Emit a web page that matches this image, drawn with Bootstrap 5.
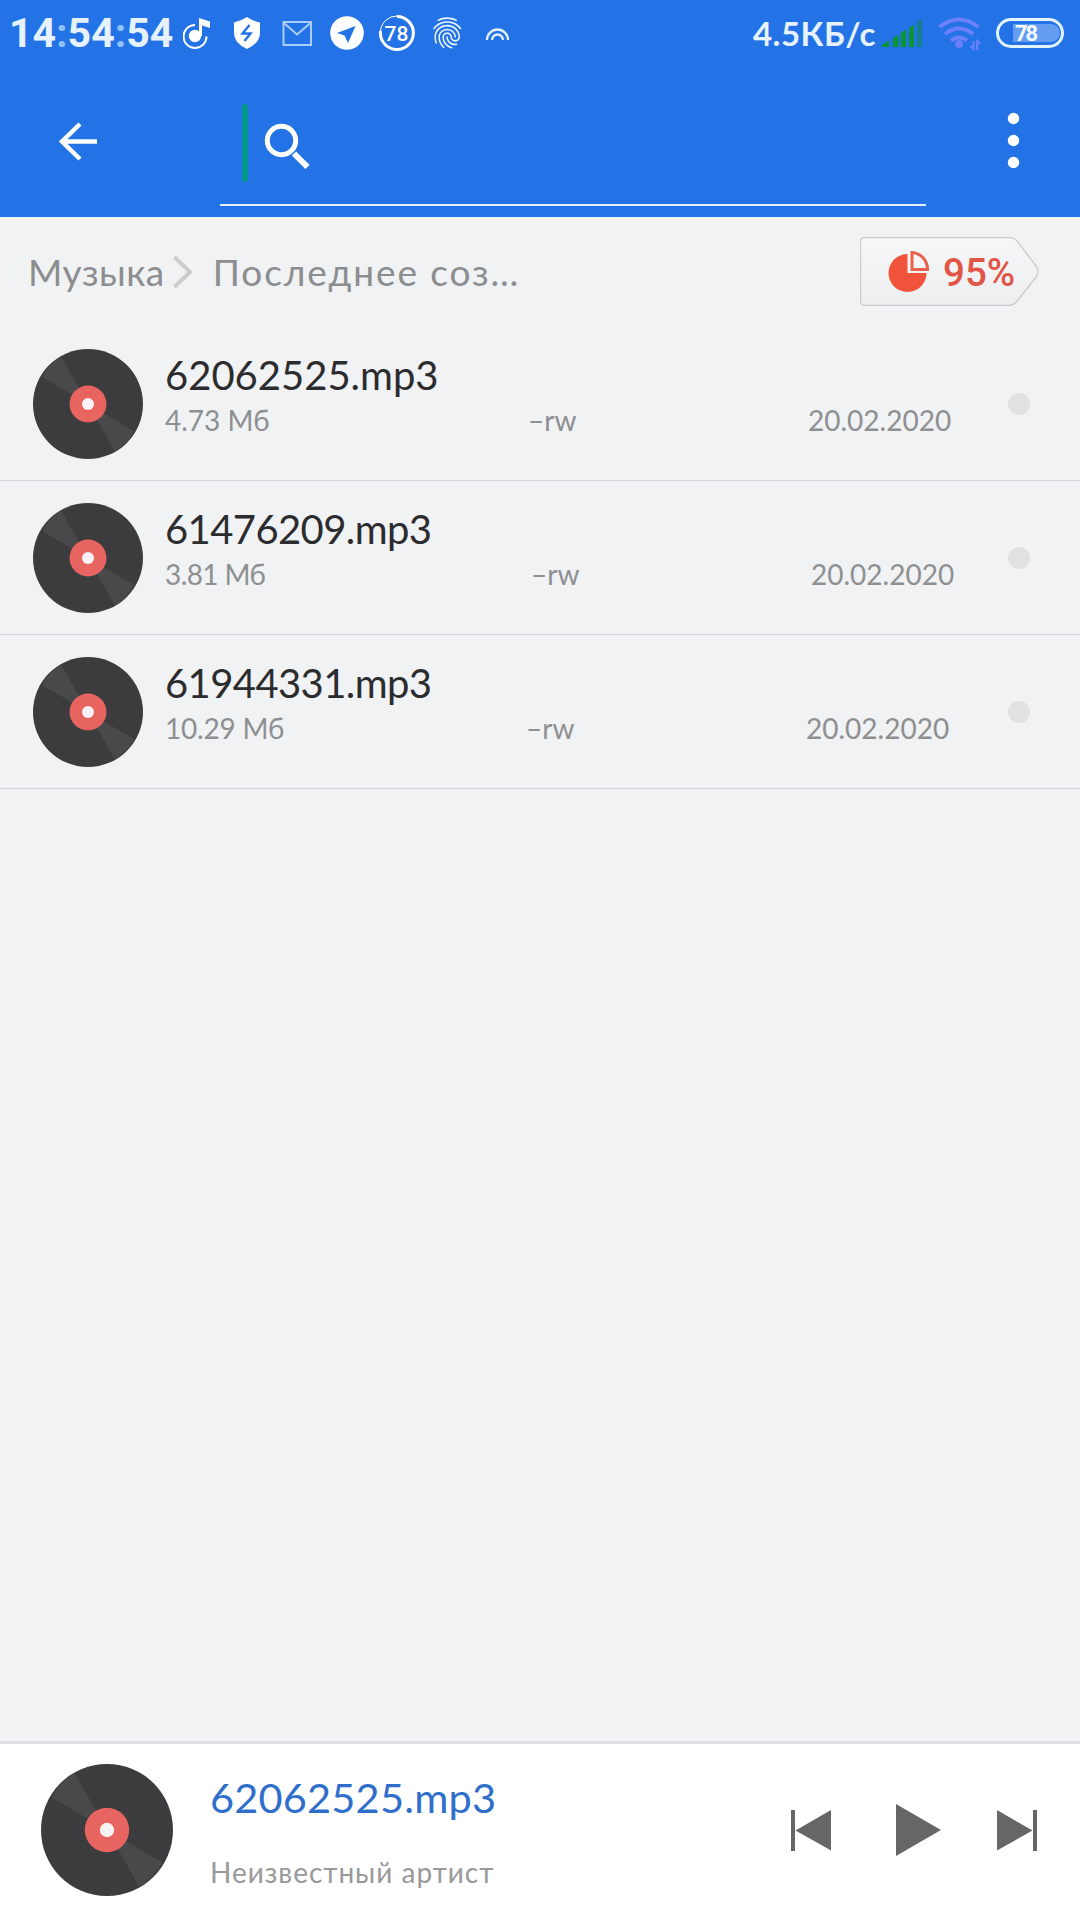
<!DOCTYPE html>
<html lang="ru">
<head>
<meta charset="utf-8">
<meta name="viewport" content="width=device-width, initial-scale=1">
<title>Музыка</title>
<link href="https://cdn.jsdelivr.net/npm/bootstrap@5.3.0/dist/css/bootstrap.min.css" rel="stylesheet">
<style>
  body { background: #f0f2f4; font-family: Lato, "Noto Sans", sans-serif; color: #2c2c2e; width: 1080px; height: 1920px; overflow: hidden; }
  svg { display: block; flex: none; }
  .topbar { background: #2373e6; height: 217px; }
  .status { height: 66px; padding-left: 9px; padding-right: 16px; color: #e6f2ff; }
  .clock { font: 700 41px/66px Roboto, sans-serif; width: 174px; white-space: nowrap; }
  .clock i { font-style: normal; color: #8fc0ff; }
  .rate { font-weight: 700; font-size: 33px; line-height: 66px; letter-spacing: .5px; white-space: nowrap; }
  .toolrow { height: 151px; padding-left: 52px; }
  .field { width: 706px; height: 140px; margin-left: 116px; padding: 16px 0 0 22px; border-bottom: 2px solid #e4f0fd; }
  .caret { width: 6px; height: 78px; background: #009688; }
  .overflow-menu { margin-left: 67px; }
  .crumbs { height: 110px; padding-left: 28px; padding-right: 41px; font-size: 37px; color: #8c8d8f; }
  .crumbs span { line-height: 48px; white-space: nowrap; }
  .c1 { letter-spacing: .5px; }
  .c2 { letter-spacing: 1.9px; margin-left: 10px; }
  .quota { width: 179px; height: 69px; top: -1px; color: #e05545; }
  .quota b { left: 83px; top: 12px; font: 500 38.5px/48px Roboto, sans-serif; }
  .track { height: 154px; padding-left: 33px; padding-right: 50px; border-bottom: 1px solid #d3d5d8; }
  .info { width: 843px; margin-left: 22px; padding-top: 23px; }
  .name { font-size: 40px; line-height: 50px; white-space: nowrap; }
  .n2, .n3 { letter-spacing: -.6px; }
  .meta { font-size: 28px; line-height: 38px; color: #8e8f91; white-space: nowrap; padding-top: 1px; }
  .size-a { width: 363px; } .size-b { width: 366px; letter-spacing: -.6px; } .size-c { width: 361px; letter-spacing: -.2px; }
  .perm { width: 280px; }
  .dot { width: 22px; height: 22px; background: #e0e1e3; }
  .player { height: 179px; border-top: 3px solid #dfe0e3; padding-left: 41px; padding-right: 42px; }
  .cover { margin-top: 20px; }
  .now-box { margin-left: 37px; padding-top: 28px; }
  .now { font-size: 41.5px; line-height: 50px; letter-spacing: .2px; color: #2f6fcb; white-space: nowrap; }
  .artist { font-size: 28px; line-height: 36px; letter-spacing: .97px; color: #999; white-space: nowrap; margin-top: 32px; }
  .controls { margin-top: 56px; }
</style>
<script src="https://cdn.jsdelivr.net/npm/bootstrap@5.3.0/dist/js/bootstrap.bundle.min.js"></script>
</head>
<body class="d-flex flex-column">
<svg width="0" height="0" class="position-absolute">
  <symbol id="disc" viewBox="0 0 110 110">
    <circle cx="55" cy="55" r="55" fill="#3c3c3e"/>
    <path d="M55 55L9 28A55 55 0 0 1 28 7.500ZM55 55L101 82A55 55 0 0 1 82 102.500Z" fill="#49494b"/>
    <circle cx="55" cy="55" r="18.500" fill="#e86461"/>
    <circle cx="55" cy="55" r="6" fill="#f7f2f3"/>
  </symbol>
</svg>

<header class="topbar flex-shrink-0">
  <div class="status d-flex align-items-center">
    <div class="clock">14<i>:</i>54<i>:</i>54</div>
    <svg width="340" height="66" viewBox="183 0 340 66" fill="none" stroke="#fff">
      <path d="M195 25A11.500 11.500 0 1 0 206.500 36.500" stroke-width="2"/>
      <circle cx="195" cy="36" r="6.200" fill="#fff" stroke="none"/>
      <path d="M199 18L210 21.500V28L202 25.500V36H199Z" fill="#fff" stroke="none"/>
      <path d="M247 17Q253 21 260 22.500V33Q260 43 247 49Q234 43 234 33V22.500Q241 21 247 17Z" fill="#fff" stroke="none"/>
      <path d="M249.500 25L242.500 33.500H250.500L244.500 41" stroke="#2373e6" stroke-width="2.400"/>
      <g stroke="#a9cdfb" stroke-width="2"><rect x="283.500" y="22" width="27.500" height="23"/><path d="M284 23L297 34.500L310.500 23"/></g>
      <circle cx="347" cy="33" r="16.800" fill="#fff" stroke="none"/>
      <path d="M355.500 26L337 33L344.500 35.500L348 43Z" fill="#2373e6" stroke="none"/>
      <path d="M397 16.500A16.500 16.500 0 1 1 380.500 31" stroke-width="3"/>
      <path d="M380.500 31A16.500 16.500 0 0 1 397 16" stroke-width="1"/>
      <text x="396.500" y="40.500" text-anchor="middle" fill="#fff" stroke="none" font-family="Roboto" font-size="21" font-weight="500">78</text>
      <g transform="translate(428.500 14.200) scale(1.560)" fill="#eaf4ff" stroke="none">
        <path d="M17.810 4.470c-.08 0-.16-.02-.23-.06C15.660 3.420 14 3 12.010 3c-1.980 0-3.860.47-5.570 1.410-.24.13-.54.04-.68-.2-.13-.24-.04-.55.2-.68C7.820 2.520 9.860 2 12.010 2c2.130 0 3.990.47 6.030 1.520.25.13.34.43.21.67-.09.18-.26.28-.44.28zM3.500 9.720c-.1 0-.2-.03-.29-.09-.23-.16-.28-.47-.12-.7.99-1.400 2.250-2.500 3.750-3.270C9.980 4.040 14 4.030 17.150 5.650c1.500.77 2.760 1.860 3.750 3.250.16.22.11.54-.12.7-.23.16-.54.11-.7-.12-.9-1.260-2.040-2.250-3.390-2.940-2.870-1.470-6.540-1.470-9.400.01-1.360.7-2.500 1.700-3.400 2.960-.08.14-.23.21-.39.21zm6.250 12.070c-.13 0-.26-.05-.35-.15-.87-.87-1.340-1.430-2.010-2.640-.69-1.230-1.050-2.730-1.050-4.340 0-2.970 2.540-5.390 5.660-5.390s5.660 2.420 5.660 5.390c0 .28-.22.5-.5.5s-.5-.22-.5-.5c0-2.420-2.090-4.390-4.660-4.390s-4.660 1.970-4.660 4.390c0 1.440.32 2.770.93 3.850.64 1.150 1.080 1.640 1.850 2.420.19.2.19.51 0 .71-.11.1-.24.15-.37.15zm7.170-1.850c-1.190 0-2.240-.3-3.100-.89-1.490-1.010-2.380-2.650-2.380-4.390 0-.28.22-.5.5-.5s.5.22.5.5c0 1.410.72 2.740 1.940 3.560.71.48 1.540.71 2.540.71.24 0 .64-.03 1.040-.1.27-.05.53.13.58.41.05.27-.13.53-.41.58-.57.11-1.070.12-1.210.12zM14.910 22c-.04 0-.09-.01-.13-.02-1.590-.44-2.630-1.030-3.720-2.100-1.400-1.390-2.170-3.240-2.170-5.220 0-1.620 1.380-2.940 3.080-2.940 1.700 0 3.080 1.320 3.080 2.940 0 1.070.93 1.940 2.080 1.940s2.080-.87 2.080-1.940c0-3.770-3.250-6.830-7.250-6.830-2.840 0-5.440 1.580-6.610 4.030-.39.81-.59 1.760-.59 2.800 0 .78.07 2.010.67 3.610.1.26-.03.55-.29.64-.26.1-.55-.04-.64-.29-.49-1.310-.73-2.610-.73-3.960 0-1.200.23-2.290.68-3.240 1.330-2.790 4.280-4.600 7.510-4.600 4.550 0 8.250 3.510 8.250 7.830 0 1.620-1.380 2.940-3.080 2.940s-3.080-1.320-3.080-2.940c0-1.070-.93-1.940-2.080-1.940s-2.080.87-2.080 1.940c0 1.710.66 3.310 1.870 4.510.95.94 1.860 1.460 3.270 1.850.27.07.42.35.35.61-.05.23-.26.38-.47.38z"/>
      </g>
      <path d="M487 40A10.500 10.500 0 0 1 508 40M492 40A5.500 5.500 0 0 1 503 40" stroke="#e3f1ff" stroke-width="2.300"/>
    </svg>
    <div class="rate ms-auto">4.5КБ/с</div>
    <svg width="184" height="66" viewBox="880 0 184 66" fill="none" class="ms-1">
      <path d="M882 47V45L889 40.500V47ZM893 47V38L898.500 34.500V47ZM901 47V33L906 29.500V47ZM909 47V28L914 25V47Z" fill="#0b9433"/>
      <path d="M917 47V22L922 18.500V47Z" fill="#167f8b"/>
      <g stroke="#6c80fc" stroke-width="4"><path d="M939.500 27Q959 12 978.500 27"/><path d="M945 34Q959 23 973 34"/><path d="M951 40.500Q959 34.500 967 40.500"/></g>
      <circle cx="959" cy="44" r="4" fill="#6c80fc"/>
      <path d="M973.500 41V49L970.500 46M977 50V41L980 44" stroke="#6c80fc" stroke-width="2"/>
      <rect x="997.500" y="19.500" width="65" height="27" rx="13.500" stroke="#e3f3ff" stroke-width="3"/>
      <path d="M1013 24H1051A9 9 0 0 1 1051 42H1013Z" fill="#649df0"/>
      <text x="1026.500" y="41" text-anchor="middle" fill="#f3faff" font-family="Roboto" font-size="22" font-weight="700" textLength="23">78</text>
    </svg>
  </div>
  <div class="toolrow d-flex">
    <svg width="52" height="151" viewBox="52 66 52 151" fill="none" stroke="#fff" stroke-width="4.500"><path d="M80 124L62 141.500L80 159M61 141.500H97"/></svg>
    <div class="field d-flex align-items-center">
      <div class="caret rounded-1"></div>
      <svg width="60" height="60" viewBox="248 113 60 60" class="overflow-visible" fill="none" stroke="#fff"><circle cx="281.500" cy="140.500" r="14.200" stroke-width="5"/><path d="M294 153.500L307.500 167" stroke-width="6"/></svg>
    </div>
    <svg width="40" height="151" viewBox="993 66 40 151" fill="#fff" class="overflow-menu"><circle cx="1013.500" cy="118.500" r="5.700"/><circle cx="1013.500" cy="140.500" r="5.700"/><circle cx="1013.500" cy="162.500" r="5.700"/></svg>
  </div>
</header>

<nav class="crumbs d-flex align-items-center flex-shrink-0">
  <span class="c1">Музыка</span>
  <svg width="22" height="36" viewBox="173 255 22 36" class="mx-2" fill="none" stroke="#cbccce" stroke-width="4"><path d="M174.500 258L190 273L174.500 288"/></svg>
  <span class="c2">Последнее соз…</span>
  <div class="quota position-relative ms-auto">
    <svg width="179" height="69" viewBox="860 237 179 69">
      <defs><linearGradient id="tag" x2="0" y2="1"><stop stop-color="#f6f7f9"/><stop offset="1" stop-color="#edeef0"/></linearGradient></defs>
      <path d="M865 237.500H1009Q1014 237.500 1017 241L1036 266Q1040 271.500 1036 277L1017 301.500Q1013 305.500 1009 305.500H865Q860.500 305.500 860.500 300.500V242.500Q860.500 237.500 865 237.500Z" fill="url(#tag)" stroke="#c9cbcd" stroke-width="1.300"/>
      <path d="M907.500 254A19 19 0 1 0 926.500 273H907.500Z" fill="#f0533a"/>
      <path d="M912 252.500V269.500H927.500A16.500 17 0 0 0 912 252.500Z" fill="#f5f5f6" stroke="#e8614d" stroke-width="3"/>
    </svg>
    <b class="position-absolute">95%</b>
  </div>
</nav>

<main class="flex-grow-1">
  <div class="track d-flex align-items-center">
    <svg width="110" height="110"><use href="#disc"/></svg>
    <div class="info align-self-start"><div class="name n1">62062525.mp3</div><div class="meta d-flex"><span class="size-a">4.73 Мб</span><span class="perm">–rw</span><span>20.02.2020</span></div></div>
    <div class="dot rounded-circle flex-shrink-0"></div>
  </div>
  <div class="track d-flex align-items-center">
    <svg width="110" height="110"><use href="#disc"/></svg>
    <div class="info align-self-start"><div class="name n2">61476209.mp3</div><div class="meta d-flex"><span class="size-b">3.81 Мб</span><span class="perm">–rw</span><span>20.02.2020</span></div></div>
    <div class="dot rounded-circle flex-shrink-0"></div>
  </div>
  <div class="track d-flex align-items-center">
    <svg width="110" height="110"><use href="#disc"/></svg>
    <div class="info align-self-start"><div class="name n3">61944331.mp3</div><div class="meta d-flex"><span class="size-c">10.29 Мб</span><span class="perm">–rw</span><span>20.02.2020</span></div></div>
    <div class="dot rounded-circle flex-shrink-0"></div>
  </div>
</main>

<footer class="player bg-white d-flex flex-shrink-0">
  <svg width="132" height="132" viewBox="0 0 110 110" class="cover"><use href="#disc"/></svg>
  <div class="now-box"><div class="now">62062525.mp3</div><div class="artist">Неизвестный артист</div></div>
  <svg width="248" height="60" viewBox="790 1800 248 60" class="controls ms-auto" fill="#666"><path d="M791 1810h4v41h-4zM795.500 1830.500L831 1810v40.500zM896 1804L941 1830L896 1856zM997 1810L1032.500 1830.500L997 1850.500zM1033 1810h4v41h-4z"/></svg>
</footer>
</body>
</html>
